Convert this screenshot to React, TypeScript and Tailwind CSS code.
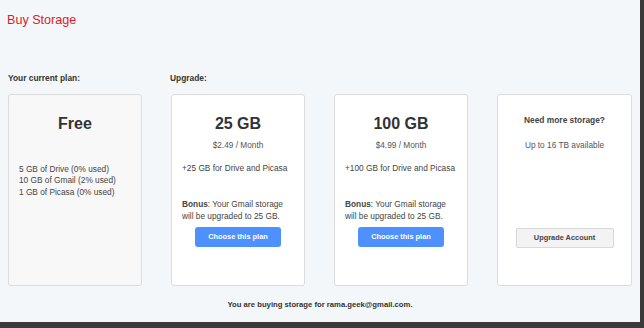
import React from 'react';

const font = { fontFamily: '"Liberation Sans", Arial, sans-serif' };

const Bonus = () => (
  <div className="mt-[24px] px-[10px] text-[8.3px] leading-[12px] text-[#444]">
    <div>
      <span className="font-bold">Bonus</span>: Your Gmail storage
    </div>
    <div>will be upgraded to 25 GB.</div>
  </div>
);

const PlanCard = ({ size, price, extra }: { size: string; price: string; extra: string }) => (
  <div className="w-[134px] h-[192px] bg-white border border-[#dcdcdc] rounded-[3px] flex flex-col">
    <div className="mt-[19px] text-center text-[16px] leading-[20px] font-bold text-[#333]">{size}</div>
    <div className="mt-[5px] text-center text-[8.3px] leading-[12px] text-[#555]">{price}</div>
    <div className="mt-[11px] px-[10px] text-[8.3px] leading-[12px] text-[#444]">{extra}</div>
    <Bonus />
    <button className="mt-[5px] self-center w-[86px] h-[20px] bg-[#4d90fe] rounded-[3px] text-white text-[7.4px] font-bold">
      Choose this plan
    </button>
  </div>
);

export default function App() {
  return (
    <div className="w-[644px] h-[328px] bg-[#3a3a3a]" style={font}>
      <div className="w-[640px] h-[322px] bg-[#f4f7f9] flex flex-col">
        <div className="pl-[7px] pt-[11px] text-[12.6px] leading-[18px] text-[#dd1b2b]">Buy Storage</div>

        <div className="flex mt-[43px] pl-[8px] text-[8.4px] leading-[12px] font-bold text-[#333]">
          <div className="w-[162px]">Your current plan:</div>
          <div>Upgrade:</div>
        </div>

        <div className="flex gap-[29px] pl-[8px] mt-[10px]">
          <div className="w-[134px] h-[192px] bg-[#f8f8f8] border border-[#dcdcdc] rounded-[3px] flex flex-col">
            <div className="mt-[19px] text-center text-[16px] leading-[20px] font-bold text-[#333]">Free</div>
            <div className="mt-[30px] px-[10px] text-[8.3px] leading-[11.3px] text-[#444]">
              <div>5 GB of Drive (0% used)</div>
              <div>10 GB of Gmail (2% used)</div>
              <div>1 GB of Picasa (0% used)</div>
            </div>
          </div>

          <PlanCard size="25 GB" price="$2.49 / Month" extra="+25 GB for Drive and Picasa" />
          <PlanCard size="100 GB" price="$4.99 / Month" extra="+100 GB for Drive and Picasa" />

          <div className="w-[135px] h-[192px] bg-white border border-[#dcdcdc] rounded-[3px] flex flex-col items-center">
            <div className="mt-[19px] text-[8.4px] leading-[12px] font-bold text-[#444]">Need more storage?</div>
            <div className="mt-[13px] text-[8.3px] leading-[12px] text-[#555]">Up to 16 TB available</div>
            <button className="mt-[77px] w-[98px] h-[20px] bg-[#f3f3f3] border border-[#d8d8d8] rounded-[2px] text-[#444] text-[7.4px] font-bold">
              Upgrade Account
            </button>
          </div>
        </div>

        <div className="mt-[13px] text-center text-[7.7px] leading-[12px] font-bold text-[#333]">
          You are buying storage for rama.geek@gmail.com.
        </div>
      </div>
    </div>
  );
}
